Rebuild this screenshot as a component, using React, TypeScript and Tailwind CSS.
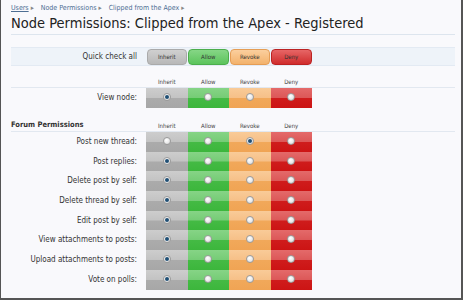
import React from "react";

const cols = [
  {
    name: "Inherit",
    cell: "bg-[linear-gradient(to_bottom,#cdcdcd_0%,#c3c3c3_48%,#ababab_52%,#a7a7a7_100%)]",
    btn: "bg-[linear-gradient(to_bottom,#d0d0d0,#b8b8b8)] border-[#aaaaaa]",
  },
  {
    name: "Allow",
    cell: "bg-[linear-gradient(to_bottom,#86d486_0%,#76cc76_48%,#44ba44_52%,#3cb63c_100%)]",
    btn: "bg-[linear-gradient(to_bottom,#86d686,#5cc45c)] border-[#4cae4c]",
  },
  {
    name: "Revoke",
    cell: "bg-[linear-gradient(to_bottom,#f9cb98_0%,#f6c088_48%,#f1a85a_52%,#f0a454_100%)]",
    btn: "bg-[linear-gradient(to_bottom,#fbcf9e,#f3b26c)] border-[#e59d55]",
  },
  {
    name: "Deny",
    cell: "bg-[linear-gradient(to_bottom,#e46a6a_0%,#dc5858_48%,#cf1c1c_52%,#cc1414_100%)]",
    btn: "bg-[linear-gradient(to_bottom,#e66666,#d02c2c)] border-[#bb2222]",
  },
];

const rows: [string, number][] = [
  ["Post new thread:", 2],
  ["Post replies:", 0],
  ["Delete post by self:", 0],
  ["Delete thread by self:", 0],
  ["Edit post by self:", 0],
  ["View attachments to posts:", 0],
  ["Upload attachments to posts:", 0],
  ["Vote on polls:", 0],
];

function Radio({ on }: { on: boolean }) {
  return (
    <span className="flex h-[8px] w-[8px] items-center justify-center rounded-full border border-[#9a9a9a] bg-[radial-gradient(circle_at_40%_35%,#ffffff,#d8d8d8)]">
      {on && <span className="h-[4px] w-[4px] rounded-full bg-[#1f4f74]" />}
    </span>
  );
}

function PermRow({ label, value, h = "h-[19.7px]" }: { label: string; value: number; h?: string }) {
  return (
    <div className={`flex ${h}`}>
      <div className="w-[126px] text-right text-[8px] leading-[19px] text-[#333]">{label}</div>
      <div className="ml-[9px] flex">
        {cols.map((c, i) => (
          <div key={c.name} className={`flex w-[41.5px] justify-center pt-[5px] ${c.cell}`}>
            <Radio on={i === value} />
          </div>
        ))}
      </div>
    </div>
  );
}

function ColHeads() {
  return (
    <div className="flex">
      {cols.map((c) => (
        <div key={c.name} className="w-[41.5px] text-center text-[6px] leading-[9px] text-[#444]">
          {c.name}
        </div>
      ))}
    </div>
  );
}

export default function App() {
  return (
    <div className="h-[300px] w-[463px] overflow-hidden border-b-2 border-l border-r-2 border-[#555] bg-[#f9f9fc] pl-[10px] pr-[6px] font-['DejaVu_Sans_Condensed','Liberation_Sans',sans-serif] [font-stretch:condensed]">
      <div className="flex items-center gap-[7px] pt-[3px] text-[7px] leading-[10px] text-[#4d6e93]">
        <span><span className="underline">Users</span> <span className="text-[#888]">▸</span></span>
        <span>Node Permissions <span className="text-[#888]">▸</span></span>
        <span>Clipped from the Apex <span className="text-[#888]">▸</span></span>
      </div>
      <h1 className="mt-[1px] text-[14.5px] leading-[19px] text-[#222]">
        Node Permissions: Clipped from the Apex - Registered
      </h1>
      <div className="mt-[1px] border-t border-[#dde5ee]" />

      <div className="mt-[12px] flex h-[19px] items-center border-y border-[#e3eaf3] bg-[#eef3f9]">
        <div className="w-[126px] text-right text-[8px] text-[#333]">Quick check all</div>
        <div className="ml-[9px] flex">
          {cols.map((c) => (
            <div key={c.name} className="w-[41.5px] px-[0.5px]">
              <div className={`flex h-[16px] items-center justify-center rounded-[4px] border text-[6px] text-[#333] ${c.btn}`}>
                {c.name}
              </div>
            </div>
          ))}
        </div>
      </div>

      <div className="mt-[11px] flex h-[9px] items-end">
        <div className="w-[135px]" />
        <ColHeads />
      </div>
      <div className="mt-[1px] border-t border-[#e2e8f0]" />
      <PermRow label="View node:" value={0} h="h-[20px]" />

      <div className="mt-[12px] flex h-[10px] items-end">
        <div className="w-[135px] text-[7.5px] font-bold leading-[10px] text-[#333]">Forum Permissions</div>
        <ColHeads />
      </div>
      <div className="mt-[1px] border-t border-[#e2e8f0]" />
      {rows.map(([l, v]) => (
        <PermRow key={l} label={l} value={v} />
      ))}
    </div>
  );
}
